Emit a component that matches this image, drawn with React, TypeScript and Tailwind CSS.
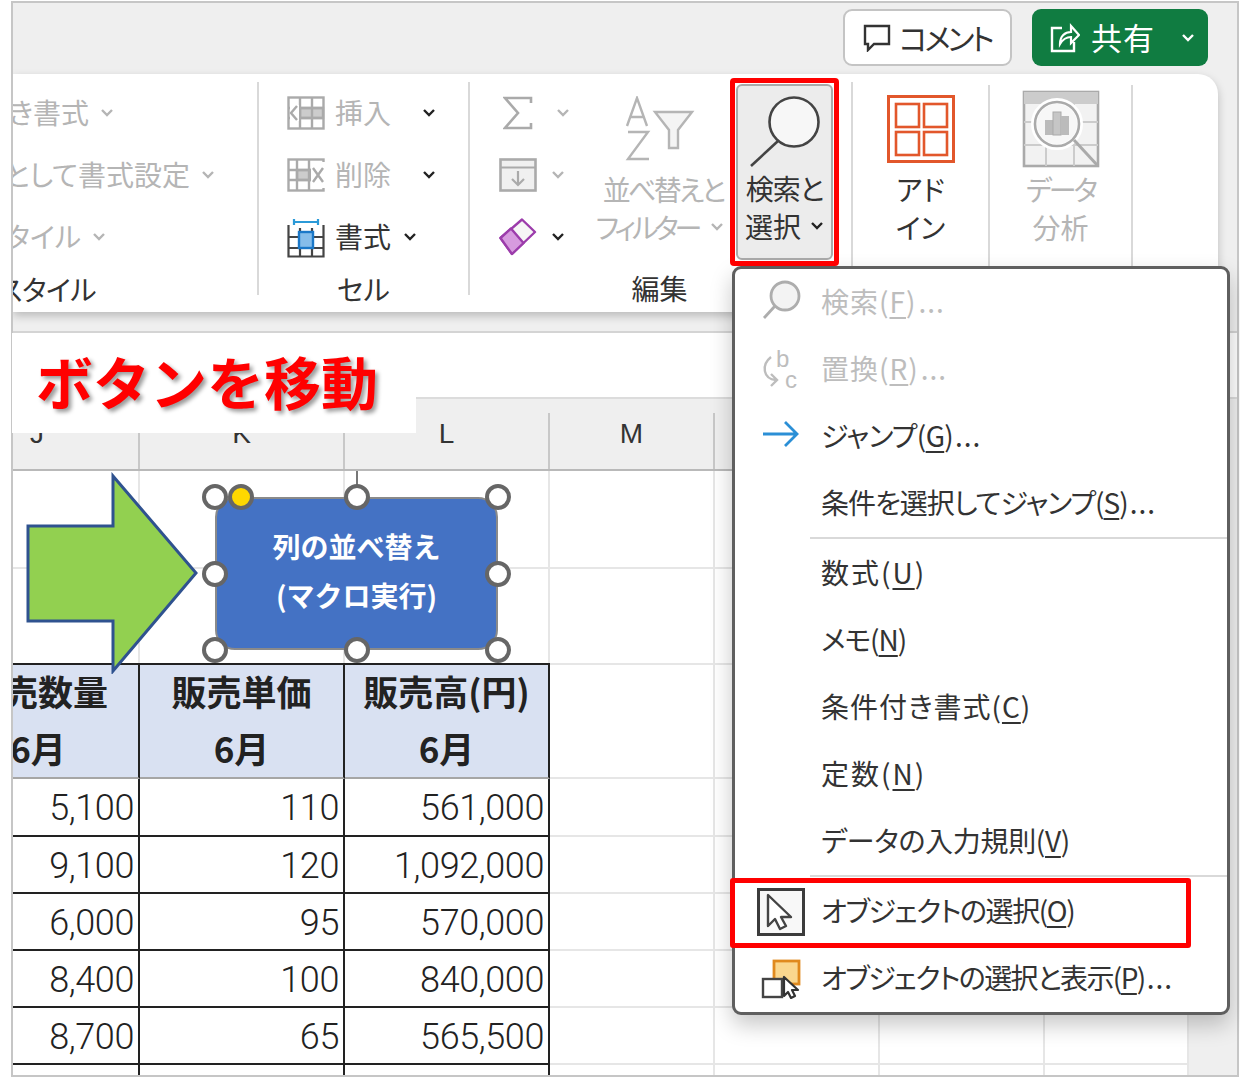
import React from "react";

const Chev = ({ c = "text-[#b5b5b5]", w = 14 }: { c?: string; w?: number }) => (
  <svg width={w} height="10" viewBox="0 0 14 10" className={`shrink-0 ${c}`} fill="none">
    <path d="M2 2l5 5 5-5" stroke="currentColor" strokeWidth="2.4" />
  </svg>
);

const InsertIcon = () => (
  <svg width="38" height="34" viewBox="0 0 38 34" fill="none" stroke="#aaa" strokeWidth="2.4">
    <rect x="1.5" y="1.5" width="35" height="31" />
    <rect x="13" y="12" width="23" height="10" fill="#ccc" />
    <path d="M13 1v32M25 1v32M1 12h36M1 22h36" />
    <rect x="3" y="9" width="9" height="16" fill="#fff" stroke="none" />
    <path d="M10 10l-6 7 6 7" />
  </svg>
);

const DeleteIcon = () => (
  <svg width="38" height="34" viewBox="0 0 38 34" fill="none" stroke="#aaa" strokeWidth="2.4">
    <rect x="1.5" y="1.5" width="35" height="31" />
    <rect x="10" y="12" width="13" height="10" fill="#ccc" />
    <path d="M10 1v32M22 1v32M1 12h36M1 22h36" />
    <rect x="24" y="4" width="14" height="26" fill="#fff" stroke="none" />
    <path d="M26 10l10 14M36 10l-10 14" />
  </svg>
);

const FormatIcon = () => (
  <svg width="38" height="42" viewBox="0 0 38 42" fill="none">
    <path d="M7 3v6M31 3v6M7 6h24" stroke="#2b9ad8" strokeWidth="2.2" />
    <path d="M1.5 9v31.5h35V9M1.5 21h35M1.5 32h35M13 12v28M25 12v28" stroke="#444" strokeWidth="2.2" />
    <rect x="12" y="16" width="14" height="16" fill="#86bdea" stroke="#1b78c8" strokeWidth="2.4" />
  </svg>
);

const SumIcon = () => (
  <svg width="30" height="34" viewBox="0 0 30 34" fill="none">
    <path d="M28 7V2H2l13 15L2 32h26v-5" stroke="#aaa" strokeWidth="2.6" />
  </svg>
);

const FillIcon = () => (
  <svg width="38" height="34" viewBox="0 0 38 34" fill="none">
    <rect x="1.5" y="1.5" width="35" height="31" fill="#f0f0f0" stroke="#aaa" strokeWidth="2.6" />
    <path d="M1 9.5h36" stroke="#aaa" strokeWidth="2.2" />
    <path d="M19 13v14M13 21l6 6 6-6" stroke="#aaa" strokeWidth="2.2" />
  </svg>
);

const EraserIcon = () => (
  <svg width="38" height="38" viewBox="0 0 38 38" fill="none">
    <path d="M23 1.5L36 14 13 36 1.5 20z" fill="#f6f6f6" stroke="#9c3cab" strokeWidth="2.4" strokeLinejoin="round" />
    <path d="M12 10.5L24.5 25 13 36 1.5 20z" fill="#d79bdf" stroke="#9c3cab" strokeWidth="2.4" strokeLinejoin="round" />
  </svg>
);

const SortIcon = () => (
  <svg width="70" height="66" viewBox="0 0 70 66" fill="none" stroke="#b5b5b5" strokeWidth="2.4">
    <path d="M2 30L12 2l10 28M5.5 21h13" />
    <path d="M3 36h20L3 63h21" />
    <path d="M30 16h37L53 34v18h-9V34z" fill="#f4f4f4" />
  </svg>
);

const FindIcon = () => (
  <svg width="72" height="74" viewBox="0 0 72 74" fill="none">
    <circle cx="45" cy="28" r="24.5" fill="#f7f7f7" stroke="#444" strokeWidth="2.6" />
    <path d="M29 47L2 72" stroke="#444" strokeWidth="2.6" />
  </svg>
);

const AddinIcon = () => (
  <svg width="68" height="68" viewBox="0 0 68 68" fill="none" stroke="#e2572b" strokeWidth="2.6">
    <rect x="1.5" y="1.5" width="65" height="65" strokeWidth="3" />
    <rect x="9" y="9" width="23" height="23" />
    <rect x="37" y="9" width="23" height="23" />
    <rect x="9" y="37" width="23" height="23" />
    <rect x="37" y="37" width="23" height="23" />
  </svg>
);

const AnalysisIcon = () => (
  <svg width="78" height="78" viewBox="0 0 78 78" fill="none">
    <rect x="2" y="2" width="74" height="74" fill="#f2f2f2" stroke="#aaa" strokeWidth="2.6" />
    <rect x="2" y="2" width="74" height="12" fill="#ccc" />
    <path d="M2 32h74M2 55h74M24 14v62M52 14v62" stroke="#ccc" strokeWidth="2" />
    <circle cx="35" cy="34" r="23" fill="#f7f7f7" stroke="#fff" strokeWidth="6" />
    <circle cx="35" cy="34" r="22" stroke="#aaa" strokeWidth="2.6" />
    <rect x="23" y="30" width="8" height="15" fill="#bbb" />
    <rect x="31" y="22" width="8" height="23" fill="#c6c6c6" stroke="#aaa" />
    <rect x="39" y="26" width="8" height="19" fill="#bbb" />
    <path d="M52 50l24 26" stroke="#aaa" strokeWidth="3" />
  </svg>
);

const MenuSearch = () => (
  <svg width="40" height="40" viewBox="0 0 40 40" fill="none" className="-mt-[6px]">
    <circle cx="24" cy="16" r="14" fill="#f3f3f3" stroke="#adadad" strokeWidth="2.8" />
    <path d="M14 26L3 38" stroke="#adadad" strokeWidth="2.8" />
  </svg>
);

const MenuReplace = () => (
  <svg width="38" height="40" viewBox="0 0 38 40" fill="none">
    <path d="M9 7C-1 15 1 29 14 30M9 24l6 6-6 6" stroke="#bdbdbd" strokeWidth="2.4" />
    <text x="14" y="17" fontSize="24" fill="#bdbdbd" fontFamily="Liberation Sans">b</text>
    <text x="23" y="38" fontSize="24" fill="#bdbdbd" fontFamily="Liberation Sans">c</text>
  </svg>
);

const MenuArrow = () => (
  <svg width="38" height="30" viewBox="0 0 38 30" fill="none" className="-mt-[6px]">
    <path d="M1 15h34M23 3l12 12-12 12" stroke="#2b8fd6" strokeWidth="2.8" />
  </svg>
);

const MenuObject = () => (
  <svg width="48" height="48" viewBox="0 0 48 48" fill="none">
    <rect x="1.5" y="1.5" width="45" height="45" fill="#f8f8f8" stroke="#3c3c3c" strokeWidth="3" />
    <path d="M11 7v31l7-7 5 10 6-3-5-9h10z" fill="#fff" stroke="#444" strokeWidth="2.4" strokeLinejoin="round" />
  </svg>
);

const MenuPane = () => (
  <svg width="40" height="40" viewBox="0 0 40 40" fill="none">
    <rect x="13" y="2" width="25" height="23" fill="#fad78e" stroke="#e08a1e" strokeWidth="2.8" />
    <rect x="2" y="20" width="19" height="18" fill="#fff" stroke="#444" strokeWidth="2.4" />
    <path d="M23 18v19l4-4 3 6 4-2-3-6h6z" fill="#fff" stroke="#333" strokeWidth="2.2" strokeLinejoin="round" />
  </svg>
);

const Dots = () => <span className="tracking-[1px] ml-[2px]">...</span>;

type Item = { pre: string; key: string; tr: string; dots?: boolean; off?: boolean; icon?: React.ReactNode };
const items1: Item[] = [
  { pre: "検索", key: "F", tr: "tracking-[1px]", dots: true, off: true, icon: <MenuSearch /> },
  { pre: "置換", key: "R", tr: "tracking-[1px]", dots: true, off: true, icon: <MenuReplace /> },
  { pre: "ジャンプ", key: "G", tr: "tracking-[-0.7px]", dots: true, icon: <MenuArrow /> },
  { pre: "条件を選択してジャンプ", key: "S", tr: "tracking-[-1px]", dots: true },
];
const items2: Item[] = [
  { pre: "数式", key: "U", tr: "tracking-[2px]" },
  { pre: "メモ", key: "N", tr: "tracking-[-1px]" },
  { pre: "条件付き書式", key: "C", tr: "tracking-[1px]" },
  { pre: "定数", key: "N", tr: "tracking-[2px]" },
  { pre: "データの入力規則", key: "V", tr: "tracking-[-0.3px]" },
];
const items3: Item[] = [
  { pre: "オブジェクトの選択", key: "O", tr: "tracking-[-1.4px]", icon: <MenuObject /> },
  { pre: "オブジェクトの選択と表示", key: "P", tr: "tracking-[-1.6px]", dots: true, icon: <MenuPane /> },
];

const MenuRow = ({ it }: { it: Item }) => (
  <div className={`flex items-center h-[67px] text-[28px] leading-none ${it.off ? "text-[#bdbdbd]" : "text-[#333]"}`}>
    <div className="w-[86px] flex justify-center pl-[6px] shrink-0">{it.icon}</div>
    <span className={`whitespace-nowrap pb-[4px] ${it.tr}`}>
      {it.pre}(<span className="underline underline-offset-4">{it.key}</span>){it.dots && <Dots />}
    </span>
  </div>
);

const Sep = () => <div className="h-[3px] ml-[75px] border-t-2 border-[#d9d9d9]" />;

const rows = [
  ["5,100", "110", "561,000"],
  ["9,100", "120", "1,092,000"],
  ["6,000", "95", "570,000"],
  ["8,400", "100", "840,000"],
  ["8,700", "65", "565,500"],
];

const colW = "grid-cols-[127px_205px_205px_165px_165px_165px_144px]";

const Blank = () => <div className="border-r-2 border-b-2 border-[#e6e6e6]" />;

const Handle = ({ pos, yellow }: { pos: string; yellow?: boolean }) => (
  <div
    className={`absolute w-[26px] h-[26px] rounded-full border-[4px] border-[#666] ${
      yellow ? "bg-[#ffd800]" : "bg-white"
    } ${pos}`}
  />
);

const StyleRow = ({ w, text }: { w: string; text: string }) => (
  <div className={`h-[62px] flex items-center justify-end gap-[11px] overflow-hidden ${w}`}>
    <span className="text-[#b5b5b5] text-[28px] whitespace-nowrap pb-[2px]">{text}</span>
    <Chev />
  </div>
);

const CellRow = ({ icon, text, on, gap }: { icon: React.ReactNode; text: string; on?: boolean; gap: string }) => (
  <div className="h-[62px] flex items-center pl-[28px]">
    <div className="w-[38px] flex justify-center">{icon}</div>
    <span className={`ml-[10px] text-[28px] whitespace-nowrap pb-[2px] ${on ? "text-[#333]" : "text-[#b5b5b5]"}`}>{text}</span>
    <div className={gap}>
      <Chev c="text-[#222]" />
    </div>
  </div>
);

const GroupLabel = ({ children }: { children: React.ReactNode }) => (
  <div className="h-[42px] flex items-center justify-center text-[28px] text-[#333] whitespace-nowrap">{children}</div>
);

export default function App() {
  return (
    <div className="relative w-[1240px] h-[1078px] bg-white overflow-hidden pl-[11px] pt-px font-['Noto_Sans_CJK_JP','Noto_Sans',sans-serif] [font-feature-settings:'palt']">
      <div className="relative z-0 w-[1228px] h-[1076px] border-2 border-[#c6c6c6] overflow-hidden flex flex-col bg-[#efefef]">
        {/* title bar */}
        <div className="h-[71px] shrink-0 flex justify-end gap-[20px] pt-[6px] pr-[29px]">
          <div className="w-[169px] h-[57px] bg-white border-2 border-[#c4c4c4] rounded-[9px] flex items-center pl-[18px] gap-[8px] text-[#333] text-[30px] tracking-[-3px]">
            <svg width="28" height="28" viewBox="0 0 28 28" fill="none">
              <path d="M2 2h24v18H11l-6 6v-6H2z" stroke="#333" strokeWidth="2.4" />
            </svg>
            <span>コメント</span>
          </div>
          <div className="w-[176px] h-[57px] bg-[#107c41] rounded-[9px] flex items-center pl-[18px] text-white text-[31px]">
            <svg width="30" height="30" viewBox="0 0 30 30" fill="none">
              <path d="M12 5H2v23h22v-9" stroke="#fff" strokeWidth="2.4" />
              <path d="M10 21c0-8 5-12 11-12V3l8 9-8 8v-6c-5 0-8 2-11 7z" stroke="#fff" strokeWidth="2.2" />
            </svg>
            <span className="ml-[11px] tracking-[1px]">共有</span>
            <div className="ml-[26px]">
              <Chev c="text-white" />
            </div>
          </div>
        </div>

        {/* ribbon */}
        <div className="relative z-10 h-[238px] shrink-0 w-[1205px] bg-white rounded-tr-[20px] flex items-start pt-[11px] shadow-[0_4px_10px_rgba(0,0,0,0.22)]">
          <div className="w-[246px] h-[213px] border-r-2 border-[#d9d9d9] -mt-[3px]">
            <StyleRow w="w-[101px]" text="条件付き書式" />
            <StyleRow w="w-[202px]" text="テーブルとして書式設定" />
            <StyleRow w="w-[93px]" text="セルのスタイル" />
            <div className="h-[42px] w-[83px] overflow-hidden flex items-center justify-end text-[28px] tracking-[-0.5px] text-[#333] whitespace-nowrap">
              スタイル
            </div>
          </div>
          <div className="w-[211px] h-[213px] border-r-2 border-[#d9d9d9] -mt-[3px]">
            <CellRow icon={<InsertIcon />} text="挿入" gap="ml-[31px]" />
            <CellRow icon={<DeleteIcon />} text="削除" gap="ml-[31px]" />
            <CellRow icon={<FormatIcon />} text="書式" on gap="ml-[12px]" />
            <GroupLabel>セル</GroupLabel>
          </div>
          <div className="w-[383px] h-[213px] border-r-2 border-[#d9d9d9] -mt-[3px]">
            <div className="flex h-[186px]">
              <div className="w-[120px]">
                <div className="h-[62px] flex items-center pl-[33px] gap-[23px]">
                  <SumIcon />
                  <Chev />
                </div>
                <div className="h-[62px] flex items-center pl-[29px] gap-[14px]">
                  <FillIcon />
                  <Chev />
                </div>
                <div className="h-[62px] flex items-center pl-[29px] gap-[14px]">
                  <EraserIcon />
                  <Chev c="text-[#222]" />
                </div>
              </div>
              <div className="w-[146px] flex flex-col items-center text-[28px] text-[#b5b5b5] leading-[38px] pt-[14px]">
                <div className="h-[74px] pr-[6px]">
                  <SortIcon />
                </div>
                <span className="whitespace-nowrap tracking-[-2.8px]">並べ替えと</span>
                <span className="flex items-center gap-[12px] whitespace-nowrap mr-[6px] tracking-[-4px]">
                  フィルター <Chev />
                </span>
              </div>
              <div className="w-[97px] h-[176px] mt-[2px] bg-[#ececec] border-2 border-[#aaa] rounded-[6px] flex flex-col items-center text-[28px] text-[#333] leading-[38px] pt-[8px]">
                <div className="h-[75px] shrink-0">
                  <FindIcon />
                </div>
                <span className="whitespace-nowrap tracking-[-1px]">検索と</span>
                <span className="flex items-center gap-[9px] whitespace-nowrap">
                  選択 <Chev c="text-[#222]" />
                </span>
              </div>
            </div>
            <div className="pr-[2px] -mt-[1px]">
              <GroupLabel>編集</GroupLabel>
            </div>
          </div>
          <div className="w-[137px] h-[213px] border-r-2 border-[#d9d9d9] flex flex-col items-center text-[28px] text-[#333] leading-[38px] pt-[10px]">
            <div className="h-[75px]">
              <AddinIcon />
            </div>
            <span>アド</span>
            <span>イン</span>
          </div>
          <div className="w-[143px] h-[213px] border-r-2 border-[#d9d9d9] flex flex-col items-center text-[28px] text-[#b5b5b5] leading-[38px] pt-[5px]">
            <div className="h-[80px]">
              <AnalysisIcon />
            </div>
            <span className="tracking-[-3px]">データ</span>
            <span>分析</span>
          </div>
        </div>

        {/* strip under ribbon */}
        <div className="h-[21px] shrink-0 border-b-2 border-[#d4d4d4]" />
        {/* formula area */}
        <div className="h-[66px] shrink-0 bg-white border-b-2 border-[#dcdcdc]" />

        {/* sheet */}
        <div className="flex flex-1 min-h-0">
          <div className="w-[1176px] shrink-0 bg-white">
            <div className={`grid ${colW} h-[72px] bg-[#efefef] border-b-2 border-[#b9b9b9] text-[#333] text-[28px]`}>
              {["J", "K", "L", "M", "", "", ""].map((l, i) => (
                <div key={i} className="flex items-end overflow-hidden">
                  <div className="h-[56px] w-full border-r-2 border-[#c8c8c8] pb-[14px] flex items-center justify-center font-['Liberation_Sans',sans-serif]">
                    <span className={i === 0 ? "-ml-[77px]" : ""}>{l}</span>
                  </div>
                </div>
              ))}
            </div>
            <div className={`grid ${colW} grid-rows-[98px_96px_114px_58px_57px_57px_57px_57px_12px]`}>
              {Array.from({ length: 14 }).map((_, i) => (
                <Blank key={i} />
              ))}

              {["販売数量", "販売単価", "販売高(円)"].map((t, i) => (
                <div
                  key={t}
                  className="bg-[#d9e1f2] border-t-2 border-r-2 border-t-[#222] border-r-[#222] border-b-2 border-b-[#a6a6a6] overflow-hidden -mt-[2px] font-bold text-[35px] text-[#222] leading-[57px] text-center"
                >
                  <div className={i === 0 ? "w-[204px] -ml-[77px] -mt-[3px] whitespace-nowrap" : "-mt-[3px] whitespace-nowrap"}>{t}</div>
                  <div className={i === 0 ? "w-[204px] -ml-[77px]" : ""}>6月</div>
                </div>
              ))}
              <Blank />
              <Blank />
              <Blank />
              <Blank />

              {rows.map((r) => (
                <React.Fragment key={r[0]}>
                  {r.map((v, i) => (
                    <div
                      key={i}
                      className="border-r-2 border-b-2 border-[#222] flex items-center justify-end pr-[4px] pt-[2px] text-[36px] tracking-[-0.4px] font-['Roboto',sans-serif] font-light text-[#222]"
                    >
                      {v}
                    </div>
                  ))}
                  <Blank />
                  <Blank />
                  <Blank />
                  <Blank />
                </React.Fragment>
              ))}

              <div className="border-r-2 border-[#222]" />
              <div className="border-r-2 border-[#222]" />
              <div className="border-r-2 border-[#222]" />
              <div className="border-r-2 border-[#e6e6e6]" />
              <div className="border-r-2 border-[#e6e6e6]" />
              <div className="border-r-2 border-[#e6e6e6]" />
              <div className="border-r-2 border-[#e6e6e6]" />
            </div>
          </div>
        </div>
      </div>

      {/* caption over the sheet */}
      <div className="absolute left-[12px] top-[333px] w-[404px] h-[100px] bg-white pl-[24px] pt-[3px] text-[57px] leading-[88px] font-bold text-[#ff0000] whitespace-nowrap [font-feature-settings:normal] [text-shadow:3px_3px_4px_rgba(0,0,0,0.4)]">
        ボタンを移動
      </div>

      {/* green arrow */}
      <svg className="absolute left-[24px] top-[472px]" width="176" height="202" viewBox="0 0 176 202" fill="none">
        <path d="M4 54h85V4l83 97-83 98v-50H4z" fill="#92d050" stroke="#2f528f" strokeWidth="3" />
      </svg>

      {/* selected shape */}
      <div className="absolute left-[356px] top-[471px] w-[2px] h-[16px] bg-[#777]" />
      <div className="absolute left-[215px] top-[497px] w-[283px] h-[153px] bg-[#4472c4] border-2 border-[#8a8a8a] rounded-[20px] flex flex-col items-center justify-center text-white text-[28px] font-bold leading-[49px] pb-[6px] [font-feature-settings:normal]">
        <span>列の並べ替え</span>
        <span>(マクロ実行)</span>
      </div>
      <Handle pos="left-[202px] top-[484px]" />
      <Handle pos="left-[228px] top-[484px]" yellow />
      <Handle pos="left-[344px] top-[484px]" />
      <Handle pos="left-[485px] top-[484px]" />
      <Handle pos="left-[202px] top-[561px]" />
      <Handle pos="left-[485px] top-[561px]" />
      <Handle pos="left-[202px] top-[637px]" />
      <Handle pos="left-[344px] top-[637px]" />
      <Handle pos="left-[485px] top-[637px]" />

      {/* dropdown menu */}
      <div className="absolute left-[732px] top-[266px] w-[498px] h-[749px] bg-white border-[3px] border-[#5f5f5f] rounded-[9px] shadow-[0_10px_22px_rgba(0,0,0,0.22)]">
        {items1.map((it) => (
          <MenuRow key={it.pre} it={it} />
        ))}
        <Sep />
        {items2.map((it) => (
          <MenuRow key={it.pre} it={it} />
        ))}
        <Sep />
        {items3.map((it) => (
          <MenuRow key={it.pre} it={it} />
        ))}
      </div>

      {/* red callouts */}
      <div className="absolute left-[730px] top-[78px] w-[109px] h-[188px] border-[5px] border-[#ff0000] rounded-[4px]" />
      <div className="absolute left-[730px] top-[878px] w-[461px] h-[70px] border-[5px] border-[#ff0000] rounded-[3px]" />
    </div>
  );
}
